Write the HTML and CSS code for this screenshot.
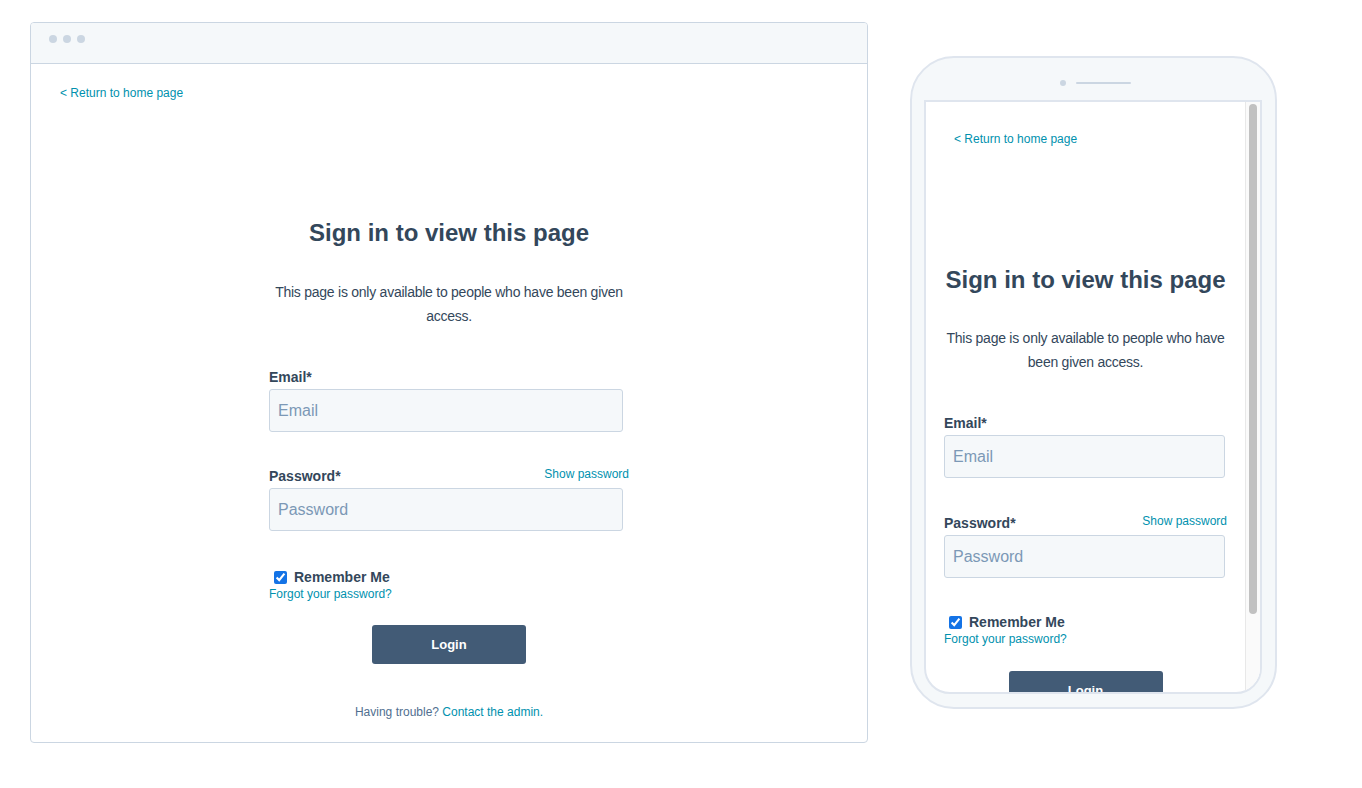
FILE: index.html
```html
<!DOCTYPE html>
<html lang="en">
<head>
<meta charset="utf-8">
<title>Sign in to view this page</title>
<link rel="stylesheet" href="styles.css">
</head>
<body>
<div class="stage">
  <div class="browser">
    <div class="browser-bar">
      <span class="dot"></span><span class="dot"></span><span class="dot"></span>
    </div>
    <div class="page">
      <a class="back" href="#">&lt; Return to home page</a>
      <div class="login">
        <h1 class="title">Sign in to view this page</h1>
        <p class="intro">This page is only available to people who have been given access.</p>
        <label class="label">Email*</label>
        <input class="field" type="email" placeholder="Email">
        <div class="pw-row">
          <label class="label">Password*</label>
          <a class="show" href="#">Show password</a>
        </div>
        <input class="field" type="password" placeholder="Password">
        <label class="remember"><input type="checkbox" checked> Remember Me</label>
        <a class="forgot" href="#">Forgot your password?</a>
        <div class="btn-row"><button class="btn">Login</button></div>
        <p class="trouble">Having trouble? <a href="#">Contact the admin.</a></p>
      </div>
    </div>
  </div>

  <div class="phone">
    <div class="phone-top">
      <span class="cam"></span><span class="speaker"></span>
    </div>
    <div class="screen">
      <div class="screen-content">
        <a class="back" href="#">&lt; Return to home page</a>
        <div class="login login-m">
          <h1 class="title">Sign in to view this page</h1>
          <p class="intro">This page is only available to people who have been given access.</p>
          <label class="label">Email*</label>
          <input class="field" type="email" placeholder="Email">
          <div class="pw-row">
            <label class="label">Password*</label>
            <a class="show" href="#">Show password</a>
          </div>
          <input class="field" type="password" placeholder="Password">
          <label class="remember"><input type="checkbox" checked> Remember Me</label>
          <a class="forgot" href="#">Forgot your password?</a>
          <div class="btn-row"><button class="btn">Login</button></div>
        </div>
      </div>
      <div class="scrollbar"><div class="thumb"></div></div>
    </div>
  </div>
</div>
</body>
</html>
```

FILE: styles.css
```css
* { box-sizing: border-box; }
html, body { margin: 0; padding: 0; background: #fff; }
body {
  font-family: "Liberation Sans", Arial, Helvetica, sans-serif;
  color: #33475b;
}
.stage {
  display: flex;
  align-items: flex-start;
  gap: 42px;
  padding: 22px 0 0 30px;
}
a { color: #0091ae; text-decoration: none; }

/* desktop browser frame */
.browser {
  width: 838px;
  height: 721px;
  border: 1px solid #cbd6e2;
  border-radius: 4px;
  overflow: hidden;
  display: flex;
  flex-direction: column;
}
.browser-bar {
  flex-shrink: 0;
  height: 41px;
  background: #f5f8fa;
  border-bottom: 1px solid #cbd6e2;
  display: flex;
  align-items: center;
  gap: 6px;
  padding: 0 0 8px 18px;
}
.dot {
  width: 8px; height: 8px;
  border-radius: 50%;
  background: #cbd6e2;
}
.page {
  padding: 21px 29px 0;
}
.back {
  display: block;
  font-size: 12px;
  line-height: 16px;
}

.login {
  width: 360px;
  margin: 0 auto;
  display: flex;
  flex-direction: column;
}
.title {
  margin: 117px 0 0;
  font-size: 24px;
  line-height: 30px;
  font-weight: 700;
  text-align: center;
  color: #33475b;
}
.intro {
  margin: 32px 0 0;
  font-size: 14px;
  line-height: 24px;
  letter-spacing: -0.25px;
  text-align: center;
}
.label {
  display: block;
  margin: 40px 0 3px;
  font-size: 14px;
  line-height: 18px;
  font-weight: 700;
}
.field {
  width: 354px;
  height: 43px;
  border: 1px solid #cbd6e2;
  border-radius: 3px;
  background: #f5f8fa;
  padding: 0 8px;
  font-family: inherit;
  font-size: 16px;
  color: #33475b;
  outline: none;
}
.field::placeholder { color: #7c98b6; }
.pw-row {
  margin-top: 34px;
  margin-bottom: 3px;
  display: flex;
  justify-content: space-between;
  align-items: flex-end;
}
.pw-row .label { margin: 0; }
.show {
  font-size: 12px;
  line-height: 16px;
  margin-bottom: 3px;
}
.remember {
  margin: 38px 0 0 5px;
  display: flex;
  align-items: center;
  gap: 3px;
  font-size: 14px;
  line-height: 17px;
  font-weight: 700;
}
.remember input {
  margin: 0 4px 0 0;
  width: 13px; height: 13px;
  accent-color: #1473e6;
}
.forgot {
  display: block;
  font-size: 12px;
  line-height: 16px;
  margin-top: 0;
}
.btn-row {
  display: flex;
  justify-content: center;
  margin-top: 23px;
}
.btn {
  width: 154px;
  height: 39px;
  border: none;
  border-radius: 3px;
  background: #425b76;
  color: #fff;
  font-family: inherit;
  font-size: 13px;
  font-weight: 700;
}
.trouble {
  margin: 40px 0 23px;
  font-size: 12px;
  line-height: 16px;
  text-align: center;
  color: #516f90;
}

/* phone */
.phone {
  margin-top: 34px;
  width: 367px;
  height: 653px;
  border: 2px solid #dfe5ee;
  border-radius: 44px;
  background: #f5f8fa;
  padding: 0 13px 13px 12px;
  display: flex;
  flex-direction: column;
}
.phone-top {
  flex-shrink: 0;
  height: 42px;
  display: flex;
  justify-content: center;
  align-items: center;
  gap: 10px;
  padding: 8px 0 0 4px;
}
.cam {
  width: 6px; height: 6px;
  border-radius: 50%;
  background: #cbd6e2;
}
.speaker {
  width: 55px; height: 2px;
  border-radius: 1px;
  background: #cbd6e2;
}
.screen {
  flex: 1;
  min-height: 0;
  border: 2px solid #dfe5ee;
  border-radius: 0 0 26px 26px;
  background: #fff;
  overflow: hidden;
  display: flex;
}
.screen-content {
  flex: 1;
  padding: 29px 0 0 28px;
  overflow: hidden;
}
.login-m { width: 283px; margin: 0 auto 0 -10px; }
.login-m .title { margin-top: 118px; }
.login-m .intro { margin-top: 31px; }
.login-m .field { width: 281px; }
.login-m .pw-row { margin-top: 35px; }
.login-m .remember { margin-top: 36px; }
.login-m .btn-row { margin-top: 24px; }
.scrollbar {
  flex-shrink: 0;
  width: 15px;
  background: #fafafa;
  border-left: 1px solid #e8e8e8;
  padding-top: 2px;
}
.thumb {
  width: 8px;
  height: 510px;
  margin: 0 auto;
  border-radius: 4px;
  background: #c1c1c1;
}
```
